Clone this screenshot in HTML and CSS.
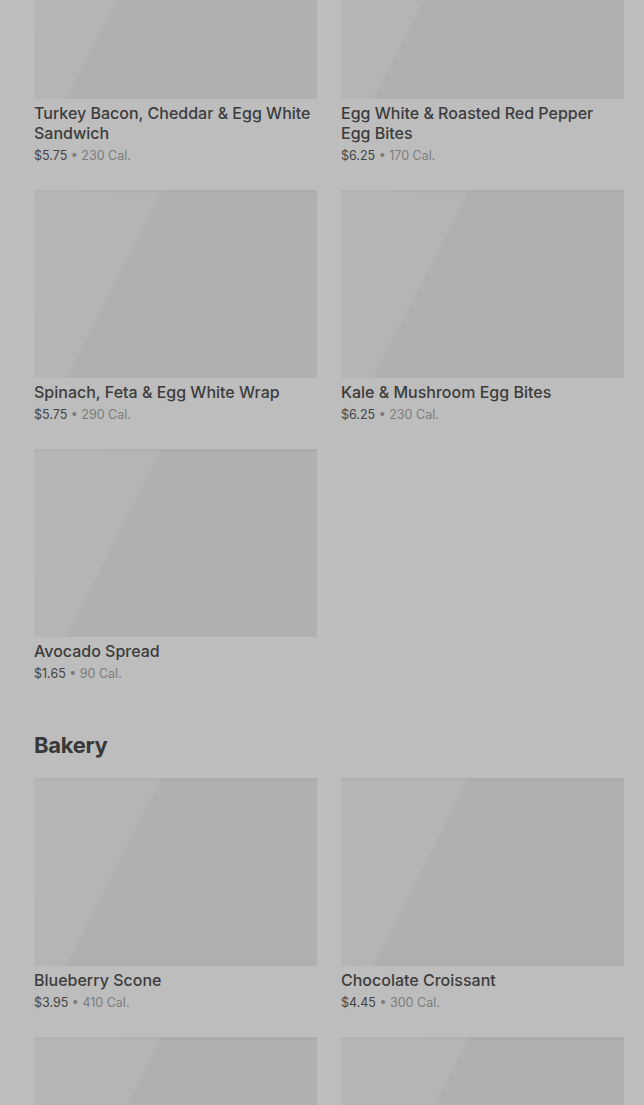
FILE: index.html
```html
<!DOCTYPE html>
<html lang="en">
  <head>
    <meta charset="UTF-8" />
    <meta name="viewport" content="width=device-width, initial-scale=1.0" />
    <title>Menu</title>
    <link rel="stylesheet" href="styles.css">
  </head>
  <body>
    <main class="menu">
      <section class="category">
        <div class="grid">
          <div class="card">
            <div class="thumb"></div>
            <span class="name">Turkey Bacon, Cheddar &amp; Egg White Sandwich</span>
            <span class="meta"><span class="price">$5.75</span> • 230 Cal.</span>
          </div>
          <div class="card">
            <div class="thumb"></div>
            <span class="name">Egg White &amp; Roasted Red Pepper Egg Bites</span>
            <span class="meta"><span class="price">$6.25</span> • 170 Cal.</span>
          </div>
          <div class="card">
            <div class="thumb"></div>
            <span class="name">Spinach, Feta &amp; Egg White Wrap</span>
            <span class="meta"><span class="price">$5.75</span> • 290 Cal.</span>
          </div>
          <div class="card">
            <div class="thumb"></div>
            <span class="name">Kale &amp; Mushroom Egg Bites</span>
            <span class="meta"><span class="price">$6.25</span> • 230 Cal.</span>
          </div>
          <div class="card">
            <div class="thumb"></div>
            <span class="name">Avocado Spread</span>
            <span class="meta"><span class="price">$1.65</span> • 90 Cal.</span>
          </div>
        </div>
      </section>

      <section class="category">
        <h2 class="category-title">Bakery</h2>
        <div class="grid">
          <div class="card">
            <div class="thumb"></div>
            <span class="name">Blueberry Scone</span>
            <span class="meta"><span class="price">$3.95</span> • 410 Cal.</span>
          </div>
          <div class="card">
            <div class="thumb"></div>
            <span class="name">Chocolate Croissant</span>
            <span class="meta"><span class="price">$4.45</span> • 300 Cal.</span>
          </div>
          <div class="card">
            <div class="thumb"></div>
          </div>
          <div class="card">
            <div class="thumb"></div>
          </div>
        </div>
      </section>
    </main>
  </body>
</html>
```

FILE: styles.css
```css
* {
  padding: 0;
  margin: 0;
  box-sizing: border-box;
  font-family: "Inter", "Roboto", "Liberation Sans", sans-serif;
}

html,
body {
  background-color: #bdbdbd;
  overflow: hidden;
}

/* page is shown scrolled, first row of pictures is cut off */
.menu {
  margin-top: -89px;
  padding: 0 20px 40px 34px;
}

.category + .category {
  margin-top: 47px;
}

.category-title {
  font-size: 22px;
  line-height: 28px;
  font-weight: 700;
  letter-spacing: -0.3px;
  color: #383838;
  margin-bottom: 19px;
}

.grid {
  display: grid;
  grid-template-columns: 1fr 1fr;
  column-gap: 24px;
  row-gap: 24px;
}

.card {
  display: flex;
  flex-direction: column;
}

.thumb {
  width: 100%;
  height: 188px;
  background-color: #b0b0b0;
  background-image: linear-gradient(
    117deg,
    #b6b6b6 0,
    #b5b5b5 113px,
    #b0b0b0 114px,
    #b0b0b0 100%
  );
  box-shadow: inset 0 3px 0 rgba(0, 0, 0, 0.02);
}

.name {
  margin-top: 4px;
  font-size: 16px;
  line-height: 20px;
  font-weight: 500;
  color: #3c3c3c;
}

.meta {
  margin-top: 3px;
  font-size: 12.5px;
  line-height: 20px;
  color: #7c7c7c;
}

.price {
  color: #444;
}
```
